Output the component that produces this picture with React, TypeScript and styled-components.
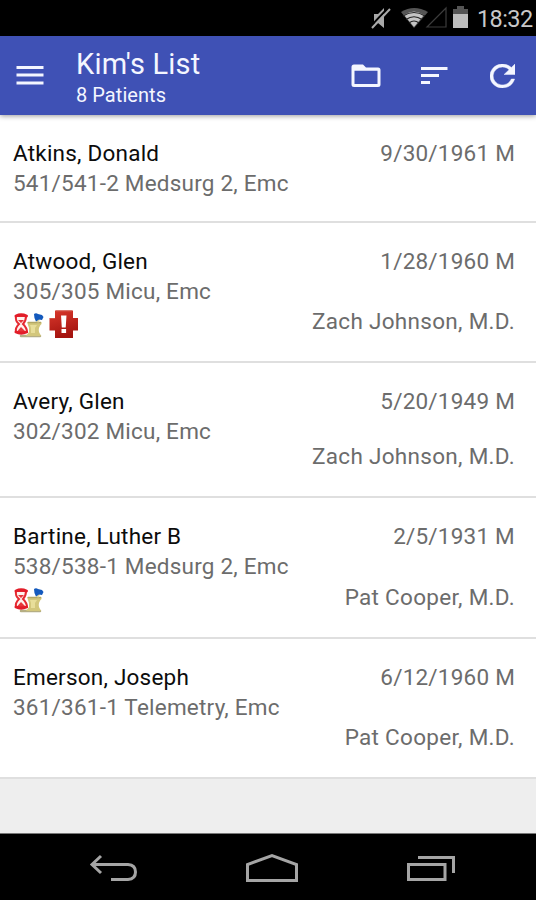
import React from "react";
import styled, { createGlobalStyle } from "styled-components";

const GlobalStyle = createGlobalStyle`
  * { box-sizing: border-box; }
  body { margin: 0; background: #000; font-family: Roboto, "Liberation Sans", sans-serif; }
`;

const Screen = styled.div`
  display: flex;
  flex-direction: column;
  width: 536px;
  height: 900px;
  background: #eeeeee;
  overflow: hidden;
`;

const StatusBar = styled.div`
  display: flex;
  flex: 0 0 36px;
  justify-content: flex-end;
  background: #000;
`;

const StatusIcons = styled.svg`
  width: 106px;
  height: 36px;
`;

const Clock = styled.time`
  width: 60px;
  height: 36px;
  padding-left: 1px;
  color: #c8c8c8;
  font-size: 23.5px;
  line-height: 38px;
  letter-spacing: -0.6px;
  white-space: nowrap;
`;

const AppBar = styled.header`
  display: flex;
  flex: 0 0 79px;
  align-items: center;
  padding-left: 16px;
  background: #3f51b5;
  color: #f4f6ff;
  box-shadow: 0 1px 5px rgba(0, 0, 0, 0.4);
  z-index: 1;
`;

const IconButton = styled.button<{ $gap?: number }>`
  display: flex;
  padding: 0;
  border: 0;
  background: none;
  color: inherit;
  margin-right: ${(p) => p.$gap ?? 0}px;
`;

const Heading = styled.div`
  flex: 1;
  height: 79px;
  padding-top: 10px;
`;

const Title = styled.h1`
  margin: 0;
  font-size: 29px;
  font-weight: 400;
  line-height: 36px;
  letter-spacing: 0.2px;
`;

const Subtitle = styled.div`
  font-size: 20px;
  line-height: 27px;
  letter-spacing: 0.05px;
`;

const PatientList = styled.main`
  flex: 1;
`;

const PatientRow = styled.article<{ $height: number }>`
  display: flex;
  justify-content: space-between;
  height: ${(p) => p.$height}px;
  padding: 23px 21px 25px 13px;
  background: #fff;
  border-bottom: 2px solid #dfdfdf;
  font-size: 22.5px;
  line-height: 30px;
  letter-spacing: 0.22px;
  color: #6c6c6c;
  white-space: nowrap;
`;

const Column = styled.div<{ $end?: boolean }>`
  display: flex;
  flex-direction: column;
  justify-content: ${(p) => (p.$end ? "space-between" : "flex-start")};
  align-items: ${(p) => (p.$end ? "flex-end" : "flex-start")};
`;

const Name = styled.div`
  color: #0c0c0c;
`;

const Doctor = styled.div`
  letter-spacing: 0.3px;
`;

const Flags = styled.div`
  display: flex;
  gap: 5px;
  padding-top: 4px;
`;

const NavBar = styled.nav`
  display: flex;
  flex: 0 0 67px;
  align-items: center;
  justify-content: space-between;
  padding: 2px 80px 0 89px;
  background: #000;
  border-top: 1px solid #777;
`;

const MedicationIcon = () => (
  <svg width="31" height="30" viewBox="0 0 31 30" aria-label="Medication pending">
    <path d="M8 26H27" stroke="#b5ae84" strokeWidth="2.500" strokeLinecap="round" />
    <path d="M14 12H28.500V14Q27 15 26 18Q25.500 20 26 22L28 26H13L16 22V18Z" fill="#d3c77c" />
    <path d="M15 12.500H28" stroke="#b2a766" strokeWidth="1.500" />
    <path d="M17 15H24L22 18V23H18V18Z" fill="#e8de9a" />
    <path d="M24 12L26 8" stroke="#dfd7a0" strokeWidth="3" />
    <path d="M21 4Q23 2.500 25 4L29 5L30.500 7L29 10L26 9.500L23 11.500Q21 9 21 4Z" fill="#1359bd" />
    <path d="M3 6H13Q13 11 10 14Q14 18 14 22H3Q2 18 6 14Q2 11 3 6Z" fill="#fff3ef" stroke="#e62a31" strokeWidth="2" />
    <path d="M3 6Q8 3.500 13.500 6M3 22Q8 24.500 13.500 22" fill="none" stroke="#e21d29" strokeWidth="3" strokeLinecap="round" />
    <path d="M5 10H11L8 13ZM4.500 21L8 17L12 21Z" fill="#e7373b" />
  </svg>
);

const AlertIcon = () => (
  <svg width="30" height="30" viewBox="0 0 30 30" aria-label="Alert">
    <defs>
      <linearGradient id="alertRed" x1="0" y1="0" x2="0.300" y2="1">
        <stop stopColor="#d9382c" />
        <stop offset="1" stopColor="#a5140f" />
      </linearGradient>
    </defs>
    <path d="M6 0.500H24V8H29V20.500H24V28H6V20.500H.5V8H6Z" fill="url(#alertRed)" />
    <path d="M7 1H23M1 8.500H6" stroke="#cf5145" />
    <path d="M12 5.500H17.500L16.700 17.500H12.800Z" fill="#fff" />
    <rect x="12.500" y="19" width="4.600" height="4" fill="#fff" />
  </svg>
);

interface Patient {
  name: string;
  place: string;
  born: string;
  doctor?: string;
  flags?: ("medication" | "alert")[];
  height: number;
}

const patients: Patient[] = [
  { name: "Atkins, Donald", place: "541/541-2 Medsurg 2, Emc", born: "9/30/1961 M", height: 108 },
  { name: "Atwood, Glen", place: "305/305 Micu, Emc", born: "1/28/1960 M", doctor: "Zach Johnson, M.D.", flags: ["medication", "alert"], height: 140 },
  { name: "Avery, Glen", place: "302/302 Micu, Emc", born: "5/20/1949 M", doctor: "Zach Johnson, M.D.", height: 135 },
  { name: "Bartine, Luther B", place: "538/538-1 Medsurg 2, Emc", born: "2/5/1931 M", doctor: "Pat Cooper, M.D.", flags: ["medication"], height: 141 },
  { name: "Emerson, Joseph", place: "361/361-1 Telemetry, Emc", born: "6/12/1960 M", doctor: "Pat Cooper, M.D.", height: 140 },
];

export default function App() {
  return (
    <Screen>
      <GlobalStyle />
      <StatusBar>
        <StatusIcons viewBox="0 0 106 36">
          <path d="M4 14H8L14 8V28L8 23H4Z" fill="#a8a8a8" />
          <path d="M2 25L18 8" stroke="#000" strokeWidth="2" />
          <path d="M2 28L20 9" stroke="#aaa" strokeWidth="2" />
          <path d="M31 12Q44 4 58 12L44 28Z" fill="#555" />
          <path d="M34 15Q44 8 54 15L44 27Z" fill="#c4c4c4" />
          <path d="M33 16Q44 9 55 16M36 19.500Q44 14 52 19.500M39 23Q44 19 49 23" fill="none" stroke="#222" strokeWidth="1.200" />
          <path d="M57 27L76 8V27Z" fill="none" stroke="#3c3c3c" strokeWidth="1.200" />
          <path d="M83 9H87V6H94V9H98V15H83Z" fill="#555" />
          <path d="M83 14H98V28H83Z" fill="#bdbdbd" />
        </StatusIcons>
        <Clock>18:32</Clock>
      </StatusBar>
      <AppBar>
        <IconButton $gap={32} aria-label="Menu">
          <svg width="28" height="22" viewBox="0 0 28 22">
            <path d="M.5 2.500H27.500M.5 10H27.500M.5 18H27.500" stroke="currentColor" strokeWidth="3" />
          </svg>
        </IconButton>
        <Heading>
          <Title>Kim's List</Title>
          <Subtitle>8 Patients</Subtitle>
        </Heading>
        <IconButton $gap={39} aria-label="Folders">
          <svg width="30" height="24" viewBox="0 0 30 24">
            <path d="M3 .5H12L15 3.500H27Q29.500 3.500 29.500 6V20.500Q29.500 23 27 23H3Q.5 23 .5 20.500V3Q.5 .5 3 .5ZM3.500 6.700V20H26.500V6.700Z" fill="currentColor" fillRule="evenodd" />
          </svg>
        </IconButton>
        <IconButton $gap={42} aria-label="Sort">
          <svg width="28" height="20" viewBox="0 0 28 20">
            <path d="M1 2.500H27.500M1 9.500H19M1 16.500H10" stroke="currentColor" strokeWidth="3" />
          </svg>
        </IconButton>
        <IconButton $gap={21} aria-label="Refresh">
          <svg width="25" height="24" viewBox="4 4 16 16" preserveAspectRatio="none">
            <path d="M17.650 6.350A8 8 0 1 0 19.730 14H17.650A6 6 0 1 1 12 6C13.660 6 15.140 6.690 16.220 7.780L13 11H20V4Z" fill="currentColor" stroke="currentColor" strokeWidth="0.300" />
          </svg>
        </IconButton>
      </AppBar>
      <PatientList>
        {patients.map((p) => (
          <PatientRow key={p.name} $height={p.height}>
            <Column>
              <Name>{p.name}</Name>
              <div>{p.place}</div>
              {p.flags && (
                <Flags>
                  {p.flags.map((f) => (f === "alert" ? <AlertIcon key={f} /> : <MedicationIcon key={f} />))}
                </Flags>
              )}
            </Column>
            <Column $end>
              <div>{p.born}</div>
              {p.doctor && <Doctor>{p.doctor}</Doctor>}
            </Column>
          </PatientRow>
        ))}
      </PatientList>
      <NavBar>
        <svg width="49" height="28" viewBox="0 0 49 28" fill="none" stroke="#a5a5a5" strokeWidth="3">
          <path d="M12 2L3 10.500L12 19M3 10.500H39Q46.500 11 46.500 18Q46.500 25 39 25.500H22" />
        </svg>
        <svg width="54" height="30" viewBox="0 0 54 30" fill="none" stroke="#a5a5a5" strokeWidth="3">
          <path d="M2.500 27.500V11.500L27 2.500L51.500 11.500V27.500Z" />
        </svg>
        <svg width="50" height="28" viewBox="0 0 50 28" fill="none" stroke="#a5a5a5" strokeWidth="3">
          <path d="M2.500 10.500H39V25.500H2.500ZM12 3.500H47.500V19" />
        </svg>
      </NavBar>
    </Screen>
  );
}
